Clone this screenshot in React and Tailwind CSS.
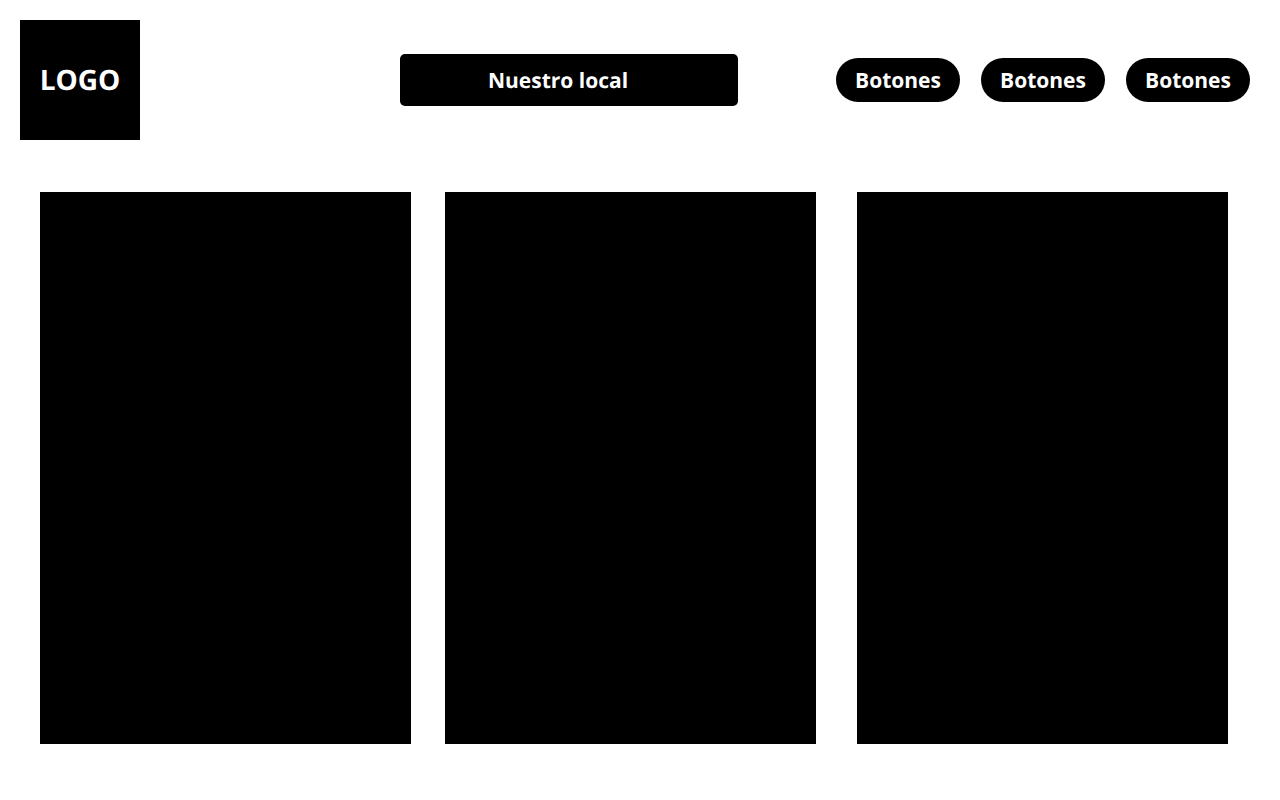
const navItems = ["Botones", "Botones", "Botones"];

export default function App() {
  return (
    <div className="min-h-screen bg-white font-['Open_Sans',sans-serif] font-bold text-white [text-rendering:geometricPrecision]">
      <header className="flex items-center p-5 pr-[30px]">
        <a href="#" className="flex size-[120px] shrink-0 items-center justify-center bg-black text-[28px] leading-8">
          LOGO
        </a>
        <div className="flex flex-1 justify-center pl-[162px]">
          <h1 className="w-[338px] rounded-[5px] bg-black pt-[11px] pb-[9px] pl-[88px] text-[21px] leading-8">
            Nuestro local
          </h1>
        </div>
        <nav className="flex shrink-0 gap-[21px]">
          {navItems.map((label, i) => (
            <button key={i} type="button" className="h-11 w-[124px] rounded-full bg-black text-[21px] leading-8">
              {label}
            </button>
          ))}
        </nav>
      </header>
      <main className="grid grid-cols-[371fr_34fr_371fr_41fr_371fr] pt-8 pr-[52px] pb-14 pl-10">
        <section className="col-start-1 h-[552px] bg-black" />
        <section className="col-start-3 h-[552px] bg-black" />
        <section className="col-start-5 h-[552px] bg-black" />
      </main>
    </div>
  );
}
